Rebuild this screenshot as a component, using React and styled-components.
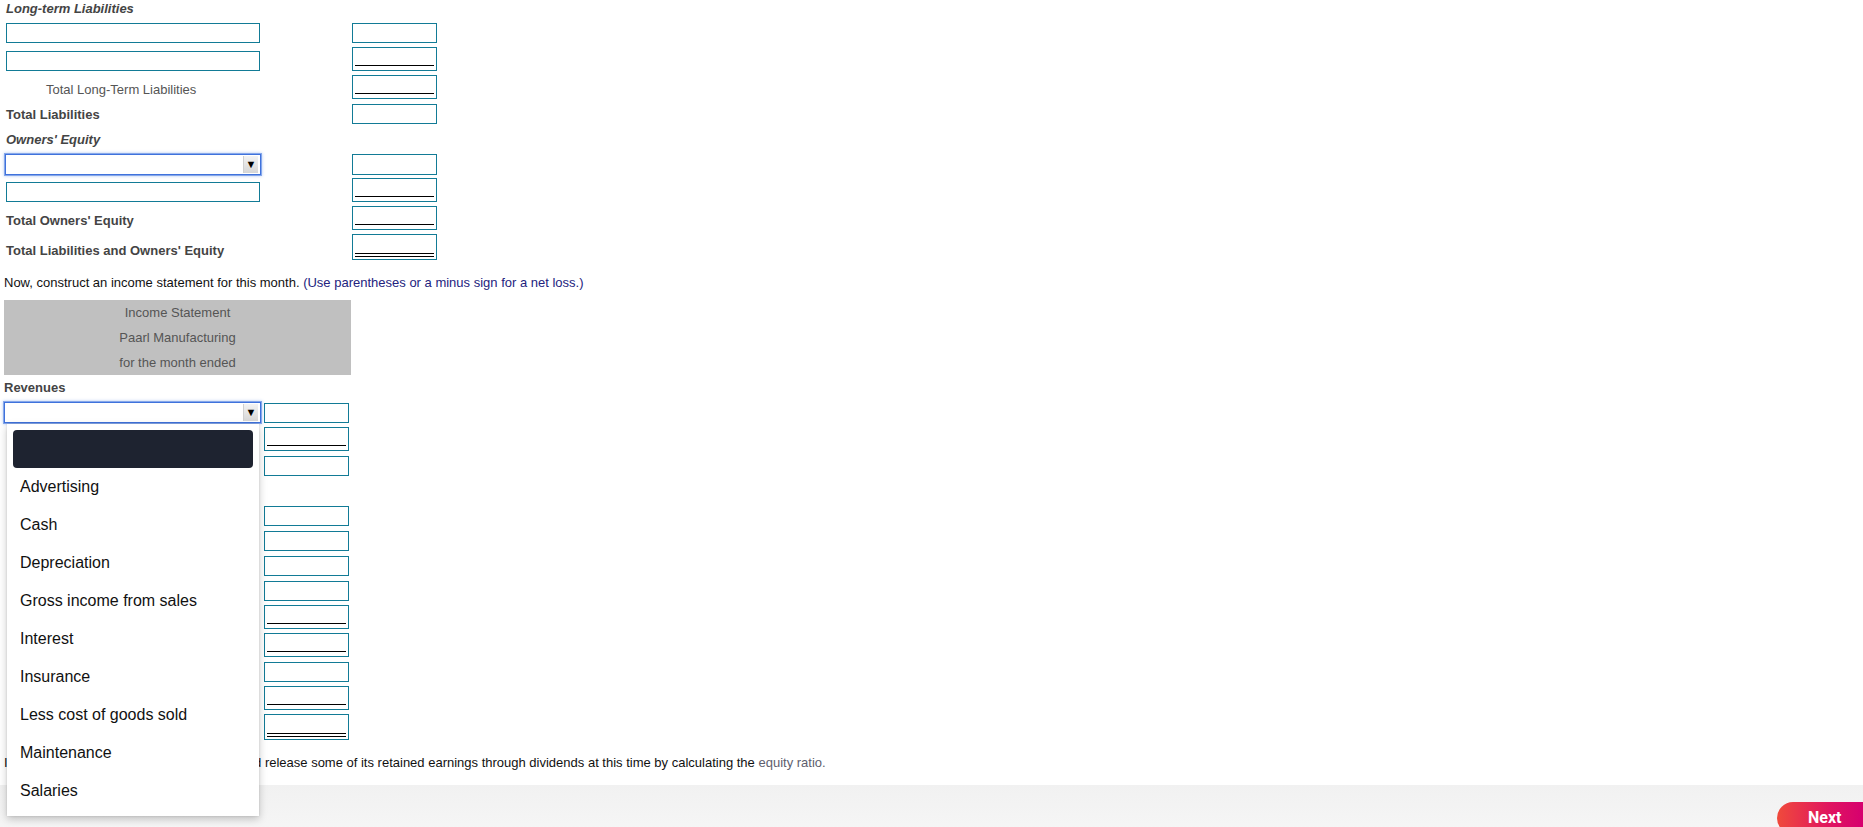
import React from "react";
import styled, { createGlobalStyle } from "styled-components";

const GlobalStyle = createGlobalStyle`
  html, body {
    margin: 0;
    padding: 0;
    background: #ffffff;
    overflow: hidden;
  }
  body {
    font-family: "Liberation Sans", Arial, sans-serif;
    font-size: 13px;
    color: #222;
  }
  * { box-sizing: border-box; }
`;

const TEAL = "#127b96";

const Page = styled.div`
  width: 1863px;
  height: 827px;
  display: flex;
  flex-direction: column;
  overflow: hidden;
`;

const Content = styled.div`
  padding-left: 4px;
  flex: 0 0 auto;
`;

const Section = styled.div`
  padding-left: ${(p) => p.$indent || 0}px;
`;

const Heading = styled.div`
  font-weight: bold;
  font-style: ${(p) => (p.$italic ? "italic" : "normal")};
  font-size: 13px;
  line-height: 18px;
  height: 18px;
  color: #444;
  margin-top: ${(p) => p.$mt || 0}px;
`;

const Row = styled.div`
  display: flex;
  align-items: flex-end;
  height: ${(p) => p.$h}px;
  margin-top: ${(p) => p.$mt}px;
`;

const LeftCell = styled.div`
  position: relative;
  width: ${(p) => p.$w}px;
  flex-shrink: 0;
  height: 100%;
  display: flex;
  align-items: flex-end;
`;

const RowLabel = styled.div`
  line-height: 18px;
  font-weight: ${(p) => (p.$bold ? "bold" : "normal")};
  color: ${(p) => (p.$bold ? "#444" : "#555")};
  padding-left: ${(p) => p.$pl || 0}px;
`;

const TextField = styled.div`
  width: 254px;
  height: 20px;
  border: 1px solid ${TEAL};
  background: #fff;
`;

const SelectBox = styled.div`
  width: ${(p) => p.$w}px;
  height: 21px;
  margin-left: ${(p) => p.$ml || 0}px;
  border: 1px solid #3f72dc;
  box-shadow: 0 0 0 1px #86a7ea, 0 0 3px 1px rgba(90, 140, 230, 0.45);
  background: #fff;
  display: flex;
  justify-content: flex-end;
  align-items: center;
  padding: 1px 2px 1px 1px;
`;

const SelectArrow = styled.div`
  width: 15px;
  height: 17px;
  background: linear-gradient(#f3f3f3, #d6d6d6);
  border-left: 1px solid #d0d0d0;
  display: flex;
  align-items: center;
  justify-content: center;
  font-size: 11px;
  color: #000;
  line-height: 1;
`;

const AmountBox = styled.div`
  width: 85px;
  height: 100%;
  flex-shrink: 0;
  border: 1px solid ${TEAL};
  background: #fff;
  display: flex;
  flex-direction: column;
  justify-content: flex-end;
  gap: 2px;
  padding: 0 2px ${(p) => (p.$rule === "double" ? 2 : 4)}px 2px;
`;

const Rule = styled.div`
  height: 1px;
  background: #000;
`;

const Instruction = styled.div`
  line-height: 18px;
  margin-top: ${(p) => p.$mt}px;
  color: #111;
  white-space: nowrap;
`;

const Hint = styled.span`
  color: #23237e;
`;

const Glossary = styled.span`
  color: #5e5e6e;
`;

const StatementHeader = styled.div`
  width: 347px;
  margin-top: 8px;
  background: #c0c0c0;
  color: #555;
  text-align: center;
`;

const HeaderLine = styled.div`
  height: 25px;
  line-height: 25px;
`;

const Menu = styled.div`
  position: absolute;
  top: calc(100% + 1px);
  left: 3px;
  width: 252px;
  background: #fff;
  padding: 6px 0;
  box-shadow: 0 3px 8px rgba(0, 0, 0, 0.22), 0 0 2px rgba(0, 0, 0, 0.12);
  z-index: 10;
`;

const MenuItem = styled.div`
  height: 38px;
  line-height: 38px;
  margin: 0 6px;
  padding-left: 7px;
  border-radius: 4px;
  font-family: "Liberation Sans", Arial, sans-serif;
  font-size: 16px;
  color: #111;
  background: ${(p) => (p.$active ? "#1e2330" : "transparent")};
`;

const Footer = styled.div`
  margin-top: 13px;
  height: 70px;
  flex-shrink: 0;
  background: linear-gradient(#f1f1f1, #f8f8f8);
  display: flex;
  justify-content: flex-end;
  align-items: flex-start;
  padding-top: 17px;
`;

const NextButton = styled.button`
  width: 86px;
  height: 32px;
  border: none;
  border-radius: 16px 0 0 16px;
  background: linear-gradient(90deg, #f04a3b 0%, #e0155f 60%, #d6006f 100%);
  color: #fff;
  font-family: Roboto, "Liberation Sans", sans-serif;
  font-weight: 700;
  font-size: 16px;
  text-align: left;
  padding: 0 0 0 31px;
  line-height: 32px;
  cursor: pointer;
`;

function Amount({ rule = "none" }) {
  return (
    <AmountBox $rule={rule}>
      {rule !== "none" && <Rule />}
      {rule === "double" && <Rule />}
    </AmountBox>
  );
}

const topRows = [
  { type: "heading", text: "Long-term Liabilities", italic: true, mt: 0 },
  { mt: 5, h: 20, left: "field", rule: "none" },
  { mt: 4, h: 24, left: "field", rule: "single" },
  { mt: 4, h: 24, left: "label", text: "Total Long-Term Liabilities", pl: 40, rule: "single" },
  { mt: 5, h: 20, left: "label", text: "Total Liabilities", bold: true, rule: "none" },
  { type: "heading", text: "Owners' Equity", italic: true, mt: 7 },
  { mt: 5, h: 21, left: "select", rule: "none" },
  { mt: 3, h: 24, left: "field", rule: "single" },
  { mt: 4, h: 24, left: "label", text: "Total Owners' Equity", bold: true, rule: "single" },
  { mt: 4, h: 26, left: "label", text: "Total Liabilities and Owners' Equity", bold: true, rule: "double" },
];

const incomeRows = [
  { mt: 6, h: 20, rule: "none", menu: true },
  { mt: 4, h: 24, rule: "single" },
  { mt: 5, h: 20, rule: "none" },
  { mt: 6, h: 18, spacer: true },
  { mt: 6, h: 20, rule: "none" },
  { mt: 5, h: 20, rule: "none" },
  { mt: 5, h: 20, rule: "none" },
  { mt: 5, h: 20, rule: "none" },
  { mt: 4, h: 24, rule: "single" },
  { mt: 4, h: 24, rule: "single" },
  { mt: 5, h: 20, rule: "none" },
  { mt: 4, h: 24, rule: "single" },
  { mt: 4, h: 26, rule: "double" },
];

const menuOptions = [
  "",
  "Advertising",
  "Cash",
  "Depreciation",
  "Gross income from sales",
  "Interest",
  "Insurance",
  "Less cost of goods sold",
  "Maintenance",
  "Salaries",
];

function Select({ w, ml }) {
  return (
    <SelectBox $w={w} $ml={ml}>
      <SelectArrow>▼</SelectArrow>
    </SelectBox>
  );
}

export default function App() {
  return (
    <>
      <GlobalStyle />
      <Page>
        <Content>
          <Section $indent={2}>
            {topRows.map((r, i) =>
              r.type === "heading" ? (
                <Heading key={i} $italic={r.italic} $mt={r.mt}>
                  {r.text}
                </Heading>
              ) : (
                <Row key={i} $h={r.h} $mt={r.mt}>
                  <LeftCell $w={346}>
                    {r.left === "field" && <TextField />}
                    {r.left === "select" && <Select w={256} ml={-1} />}
                    {r.left === "label" && (
                      <RowLabel $bold={r.bold} $pl={r.pl}>
                        {r.text}
                      </RowLabel>
                    )}
                  </LeftCell>
                  <Amount rule={r.rule} />
                </Row>
              )
            )}
          </Section>

          <Instruction $mt={14}>
            Now, construct an income statement for this month.{" "}
            <Hint>(Use parentheses or a minus sign for a net loss.)</Hint>
          </Instruction>

          <StatementHeader>
            <HeaderLine>Income Statement</HeaderLine>
            <HeaderLine>Paarl Manufacturing</HeaderLine>
            <HeaderLine>for the month ended</HeaderLine>
          </StatementHeader>

          <Heading $mt={4}>Revenues</Heading>

          {incomeRows.map((r, i) =>
            r.spacer ? (
              <Row key={i} $h={r.h} $mt={r.mt} />
            ) : (
              <Row key={i} $h={r.h} $mt={r.mt}>
                <LeftCell $w={260}>
                  {r.menu && (
                    <>
                      <Select w={257} />
                      <Menu>
                        {menuOptions.map((o, j) => (
                          <MenuItem key={j} $active={j === 0}>
                            {o}
                          </MenuItem>
                        ))}
                      </Menu>
                    </>
                  )}
                </LeftCell>
                <Amount rule={r.rule} />
              </Row>
            )
          )}

          <Instruction $mt={14}>
            Indicate whether Paarl Manufacturing should release some of its retained
            earnings through dividends at this time by calculating the{" "}
            <Glossary>equity ratio.</Glossary>
          </Instruction>
        </Content>
        <Footer>
          <NextButton>Next</NextButton>
        </Footer>
      </Page>
    </>
  );
}
